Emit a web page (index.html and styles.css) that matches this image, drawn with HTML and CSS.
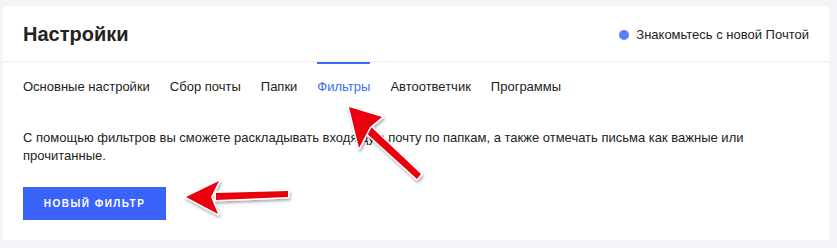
FILE: index.html
```html
<!DOCTYPE html>
<html lang="ru">
<head>
    <meta charset="UTF-8">
    <meta name="viewport" content="width=device-width, initial-scale=1.0">
    <title>Настройки</title>
    <link rel="stylesheet" href="styles.css">
</head>
<body>
    <div class="card">
        <div class="card-header">
            <h1 class="title">Настройки</h1>
            <a class="promo" href="#"><span class="dot"></span>Знакомьтесь с новой Почтой</a>
        </div>
        <nav class="tabs">
            <a class="tab" href="#">Основные настройки</a>
            <a class="tab" href="#">Сбор почты</a>
            <a class="tab" href="#">Папки</a>
            <a class="tab active" href="#">Фильтры</a>
            <a class="tab" href="#">Автоответчик</a>
            <a class="tab" href="#">Программы</a>
        </nav>
        <div class="card-body">
            <p class="desc">С помощью фильтров вы сможете раскладывать входящую почту по папкам, а также отмечать письма как важные или прочитанные.</p>
            <button class="btn" type="button">Новый фильтр</button>
        </div>
    </div>

    <!-- annotation arrows drawn over the page -->
    <svg class="arrows" width="837" height="248" viewBox="0 0 837 248">
        <defs>
            <filter id="shadow" x="-20%" y="-20%" width="140%" height="140%">
                <feDropShadow dx="1" dy="2" stdDeviation="1.5" flood-color="#000" flood-opacity="0.35"/>
            </filter>
        </defs>
        <g filter="url(#shadow)" stroke="#fff" stroke-width="3" stroke-linejoin="round" paint-order="stroke" fill="#e8000b">
            <polygon points="368,124 421,174 417,179 363,130"/>
            <polygon points="349,107 382,117 370,127 359,148"/>
            <polygon points="216,193 288,191 288,197 216,200"/>
            <polygon points="186,197 219,181 211,197 218,214"/>
        </g>
    </svg>
</body>
</html>
```

FILE: styles.css
```css
body {
    margin: 0;
    padding: 6px 8px 6px 3px;
    background-color: #f3f4f8;
    font-family: "Liberation Sans", Arial, sans-serif;
    color: #222;
    position: relative;
}
.card {
    width: 826px;
    background-color: #fff;
    box-sizing: border-box;
}
.card-header {
    height: 56px;
    padding: 2px 20px 0;
    display: flex;
    align-items: center;
    justify-content: space-between;
    border-bottom: 1px solid #eceef3;
    box-sizing: border-box;
}
.title {
    margin: 0;
    font-size: 20px;
    font-weight: bold;
    color: #222;
}
.promo {
    display: flex;
    align-items: center;
    gap: 7px;
    font-size: 13px;
    color: #222;
    text-decoration: none;
    padding-right: 0;
}
.dot {
    width: 10px;
    height: 10px;
    border-radius: 50%;
    background-color: #5b80f6;
}
.tabs {
    display: flex;
    gap: 20px;
    padding: 0 20px;
}
.tab {
    border-top: 2px solid transparent;
    padding-top: 13px;
    line-height: 20px;
    font-size: 13px;
    color: #222;
    text-decoration: none;
}
.tab.active {
    border-top-color: #3d6cf6;
    color: #3d6cf6;
}
.card-body {
    padding: 32px 20px 20px;
}
.desc {
    margin: 0;
    max-width: 770px;
    font-size: 13px;
    line-height: 18px;
    color: #222;
}
.btn {
    margin-top: 22px;
    width: 143px;
    height: 33px;
    border: none;
    background-color: #3a63f9;
    color: #fff;
    font-family: inherit;
    font-size: 10px;
    font-weight: bold;
    letter-spacing: 1.5px;
    text-transform: uppercase;
    cursor: pointer;
}
.arrows {
    position: absolute;
    left: 0;
    top: 0;
    pointer-events: none;
}
```
